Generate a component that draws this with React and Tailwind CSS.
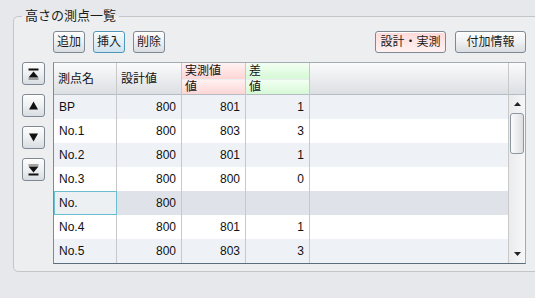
import React from "react";

const rows = [
  { name: "BP", design: "800", actual: "801", diff: "1" },
  { name: "No.1", design: "800", actual: "803", diff: "3" },
  { name: "No.2", design: "800", actual: "801", diff: "1" },
  { name: "No.3", design: "800", actual: "800", diff: "0" },
  { name: "No.", design: "800", actual: "", diff: "", editing: true },
  { name: "No.4", design: "800", actual: "801", diff: "1" },
  { name: "No.5", design: "800", actual: "803", diff: "3" },
];

const Btn = ({ children, className = "" }) => (
  <button
    className={`h-[22px] rounded-[3px] border text-[12px] leading-none text-[#1b1b1b] shadow-[inset_0_1px_0_#ffffff] ${className}`}
  >
    {children}
  </button>
);

const plainBtn =
  "border-[#7f8993] bg-gradient-to-b from-[#fdfdfd] via-[#eef0f2] to-[#d9dde1]";

const NavIcon = ({ kind }) => {
  if (kind === "up")
    return (
      <svg width="11" height="11" viewBox="0 0 11 11">
        <path d="M5.5 1.5 L10 9.5 L1 9.5 Z" fill="#111" />
      </svg>
    );
  if (kind === "down")
    return (
      <svg width="11" height="11" viewBox="0 0 11 11">
        <path d="M1 1.5 L10 1.5 L5.5 9.5 Z" fill="#111" />
      </svg>
    );
  if (kind === "first")
    return (
      <svg width="11" height="12" viewBox="0 0 11 12">
        <rect x="0.5" y="0.5" width="10" height="2" fill="#111" />
        <path d="M5.5 3.5 L10.5 9.5 L0.5 9.5 Z" fill="#111" />
        <rect x="0.5" y="10.5" width="10" height="1" fill="#555" />
      </svg>
    );
  return (
    <svg width="11" height="12" viewBox="0 0 11 12">
      <rect x="0.5" y="0.5" width="10" height="1" fill="#555" />
      <path d="M0.5 2.5 L10.5 2.5 L5.5 8.5 Z" fill="#111" />
      <rect x="0.5" y="9.5" width="10" height="2" fill="#111" />
    </svg>
  );
};

const NavBtn = ({ kind }) => (
  <button className="flex h-[23px] w-[23px] items-center justify-center rounded-[3px] border border-[#7f8993] bg-gradient-to-b from-[#fdfdfd] via-[#eef0f2] to-[#d9dde1] shadow-[inset_0_1px_0_#ffffff]">
    <NavIcon kind={kind} />
  </button>
);

const cols = "grid grid-cols-[63px_65px_64px_64px_1fr]";
const cell = "border-r border-[#c8c8c8] text-[12px] leading-[24px] text-[#111]";

export default function App() {
  return (
    <div className="h-[298px] w-[535px] overflow-hidden bg-[#e6e8eb] font-['Liberation_Sans','Noto_Sans_CJK_JP',sans-serif]">
      <fieldset className="ml-[13px] mt-[7px] w-[540px] rounded-[5px] border border-[#c2c5c9] bg-[#eceef0] pb-[7px]">
        <legend className="ml-[8px] px-[3px] text-[13px] leading-[18px] text-[#1b1b1b]">
          高さの測点一覧
        </legend>

        <div className="mt-[6px] flex w-[473px] justify-between ml-[39px]">
          <div className="flex gap-[8px]">
            <Btn className={`w-[32px] ${plainBtn}`}>追加</Btn>
            <Btn className="w-[32px] border-[#4f97b8] bg-gradient-to-b from-[#f4fafd] via-[#e4f0f6] to-[#cfe2ec]">
              挿入
            </Btn>
            <Btn className={`w-[32px] ${plainBtn}`}>削除</Btn>
          </div>
          <div className="flex gap-[9px]">
            <Btn className="w-[71px] border-[#7f8993] bg-gradient-to-b from-[#ffd9d9] via-[#ffe6e6] to-[#fff1f1]">
              設計・実測
            </Btn>
            <Btn className={`w-[71px] ${plainBtn}`}>付加情報</Btn>
          </div>
        </div>

        <div className="mt-[9px] flex gap-[8px] pl-[8px]">
          <div className="flex flex-col gap-[9px]">
            <NavBtn kind="first" />
            <NavBtn kind="up" />
            <NavBtn kind="down" />
            <NavBtn kind="last" />
          </div>

          <div className="flex w-[473px] border border-[#a2abb4] border-b-[#5d6c7b] border-l-[#7d8a97] bg-white">
            <div className="flex flex-1 flex-col">
              <div className={`${cols} h-[32px] border-b border-[#b5bcc3] bg-gradient-to-b from-[#fbfbfc] to-[#dcdfe3]`}>
                <div className="flex items-center border-r border-[#c8c8c8] pl-[4px] text-[12px] text-[#111]">
                  測点名
                </div>
                <div className="flex items-center border-r border-[#c8c8c8] pl-[4px] text-[12px] text-[#111]">
                  設計値
                </div>
                <div className="flex flex-col gap-[1px] border-r border-[#c8c8c8] pb-[1px] text-[12px] text-[#111]">
                  <div className="h-[16px] bg-gradient-to-b from-[#fff2f2] to-[#fdd5d5] pl-[3px] leading-[16px]">
                    実測値
                  </div>
                  <div className="flex-1 bg-gradient-to-b from-[#fff2f2] to-[#fdd5d5] pl-[3px] leading-[14px]">
                    値
                  </div>
                </div>
                <div className="flex flex-col gap-[1px] border-r border-[#c8c8c8] pb-[1px] text-[12px] text-[#111]">
                  <div className="h-[16px] bg-gradient-to-b from-[#f2fff2] to-[#d6f9d6] pl-[3px] leading-[16px]">
                    差
                  </div>
                  <div className="flex-1 bg-gradient-to-b from-[#f2fff2] to-[#d6f9d6] pl-[3px] leading-[14px]">
                    値
                  </div>
                </div>
                <div />
              </div>

              {rows.map((r, i) => {
                const bg = r.editing
                  ? "bg-[#dfe3e9]"
                  : i % 2 === 0
                  ? "bg-[#eef2f7]"
                  : "bg-white";
                return (
                  <div key={i} className={`${cols} h-[24px] ${bg}`}>
                    {r.editing ? (
                      <div className="border border-[#6bbdd0] bg-[#edf0f3] pl-[4px] text-[12px] leading-[22px] text-[#111]">
                        {r.name}
                      </div>
                    ) : (
                      <div className={`${cell} pl-[5px]`}>{r.name}</div>
                    )}
                    <div className={`${cell} pr-[5px] text-right`}>{r.design}</div>
                    <div className={`${cell} pr-[5px] text-right`}>{r.actual}</div>
                    <div className={`${cell} pr-[5px] text-right`}>{r.diff}</div>
                    <div />
                  </div>
                );
              })}
            </div>

            <div className="flex w-[17px] flex-col border-l border-[#c8c8c8]">
              <div className="h-[32px] border-b border-[#b5bcc3] bg-gradient-to-b from-[#fbfbfc] to-[#dcdfe3]" />
              <div className="flex flex-1 flex-col bg-gradient-to-r from-[#e9ebed] to-[#f6f7f8]">
                <div className="flex h-[18px] items-center justify-center">
                  <svg width="7" height="4" viewBox="0 0 7 4">
                    <path d="M3.5 0 L7 4 L0 4 Z" fill="#222" />
                  </svg>
                </div>
                <div className="mx-[1px] h-[41px] rounded-[3px] border border-[#8b96a1] bg-gradient-to-r from-[#fbfbfb] to-[#dcdfe2]" />
                <div className="flex-1" />
                <div className="flex h-[18px] items-center justify-center">
                  <svg width="7" height="4" viewBox="0 0 7 4">
                    <path d="M0 0 L7 0 L3.5 4 Z" fill="#222" />
                  </svg>
                </div>
              </div>
            </div>
          </div>
        </div>
      </fieldset>
    </div>
  );
}
